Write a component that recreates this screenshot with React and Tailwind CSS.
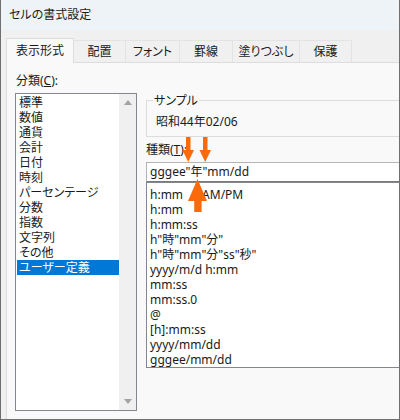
import React from "react"

const font = "font-['Noto_Sans','Noto_Sans_CJK_JP',sans-serif] [font-feature-settings:'palt']"

const tabs = ["表示形式", "配置", "フォント", "罫線", "塗りつぶし", "保護"]
const tabWidths = ["w-[68px]", "w-[52px]", "w-[54px]", "w-[53px]", "w-[67px]", "w-[52px]"]

const categories = [
  "標準",
  "数値",
  "通貨",
  "会計",
  "日付",
  "時刻",
  "パーセンテージ",
  "分数",
  "指数",
  "文字列",
  "その他",
  "ユーザー定義",
]

const formats = [
  "h:mm",
  "h:mm:ss",
  'h"時"mm"分"',
  'h"時"mm"分"ss"秒"',
  "yyyy/m/d h:mm",
  "mm:ss",
  "mm:ss.0",
  "@",
  "[h]:mm:ss",
  "yyyy/mm/dd",
  "gggee/mm/dd",
]

const Arrows = () => (
  <svg className="absolute left-[175px] top-[135px]" width="40" height="80" viewBox="0 0 40 80">
    <g fill="#fa6a0a">
      <rect x="10" y="2" width="4.5" height="15" />
      <polygon points="6.5,15 18,15 12.2,27" />
      <rect x="27" y="2" width="4.5" height="15" />
      <polygon points="23.5,15 35,15 29.2,27" />
      <polygon points="21.5,44 12,66 31,66" />
      <rect x="18.2" y="65" width="7.4" height="12" />
    </g>
  </svg>
)

const App = () => {
  return (
    <div className={`relative w-[400px] h-[420px] overflow-hidden flex flex-col bg-[#f0f0f0] border-x border-b border-[#6f6f6f] text-[#1a1a1a] ${font}`}>
      {/* title bar */}
      <div className="h-[30px] bg-[#eef3f8] flex items-center pl-[8px] text-[12px] leading-none">
        セルの書式設定
      </div>

      {/* tabs */}
      <div className="h-[32px] flex items-end pl-[5px]">
        {tabs.map((t, i) =>
          i === 0 ? (
            <div
              key={t}
              className={`${tabWidths[i]} h-[25px] -mb-px relative z-10 bg-[#f9f9f9] border border-b-0 border-[#dddddd] flex items-center justify-center text-[12px] leading-none`}
            >
              {t}
            </div>
          ) : (
            <div
              key={t}
              className={`${tabWidths[i]} h-[22px] border-t border-r border-[#e3e3e3] bg-[#f0f0f0] flex items-center justify-center text-[12px] leading-none`}
            >
              {t}
            </div>
          )
        )}
      </div>

      {/* panel */}
      <div className="flex-1 ml-[5px] bg-[#f9f9f9] border-t border-l border-[#dddddd] flex items-start pt-[10px] pl-[8px] gap-[9px]">
        {/* category column */}
        <div className="flex flex-col w-[122px] shrink-0">
          <div className="h-[15px] text-[12px] leading-[15px] pl-[1px]">
            分類(<span className="underline">C</span>):
          </div>
          <div className="mt-[5px] h-[318px] border border-[#82878f] bg-white flex">
            <div className="flex-1 pt-[1px] pl-[1px]">
              {categories.map((c) => (
                <div
                  key={c}
                  className={`h-[15px] leading-[15px] text-[12px] pl-[2px] ${
                    c === "ユーザー定義" ? "bg-[#0078d7] text-white" : ""
                  }`}
                >
                  {c}
                </div>
              ))}
            </div>
            <div className="w-[17px] bg-[#f0f0f0] flex flex-col items-center justify-between py-[6px]">
              <svg width="8" height="5" viewBox="0 0 8 5">
                <polygon points="0,5 8,5 4,0" fill="#a3a3a3" />
              </svg>
              <svg width="8" height="5" viewBox="0 0 8 5">
                <polygon points="0,0 8,0 4,5" fill="#a3a3a3" />
              </svg>
            </div>
          </div>
        </div>

        {/* type column */}
        <div className="flex-1 flex flex-col mt-[27px] -mr-[20px]">
          <div className="relative h-[37px] border border-[#dcdcdc] flex items-center pl-[9px] pt-[7px] text-[12px] leading-none">
            <span className="absolute left-[6px] -top-[8px] bg-[#f9f9f9] px-px text-[12px] leading-[15px]">サンプル</span>
            昭和44年02/06
          </div>
          <div className="mt-[6px] h-[14px] text-[12px] leading-[14px]">
            種類(<span className="underline">T</span>):
          </div>
          <div className="mt-[5px] h-[20px] bg-white border border-[#b4b4b4] border-b-[#7a7a7a] flex items-center pl-[3px] text-[12px] leading-none">
            gggee"年"mm/dd
          </div>
          <div className="h-[186px] bg-white border border-[#82878f] pt-[4px] pl-[3px]">
            <div className="h-[15px] leading-[15px] text-[12px] flex">
              <span>h:mm</span>
              <span className="ml-[19px]">AM/PM</span>
            </div>
            {formats.map((f) => (
              <div key={f} className="h-[15px] leading-[15px] text-[12px] whitespace-pre">
                {f}
              </div>
            ))}
          </div>
        </div>
      </div>

      <Arrows />
    </div>
  )
}

export default App
